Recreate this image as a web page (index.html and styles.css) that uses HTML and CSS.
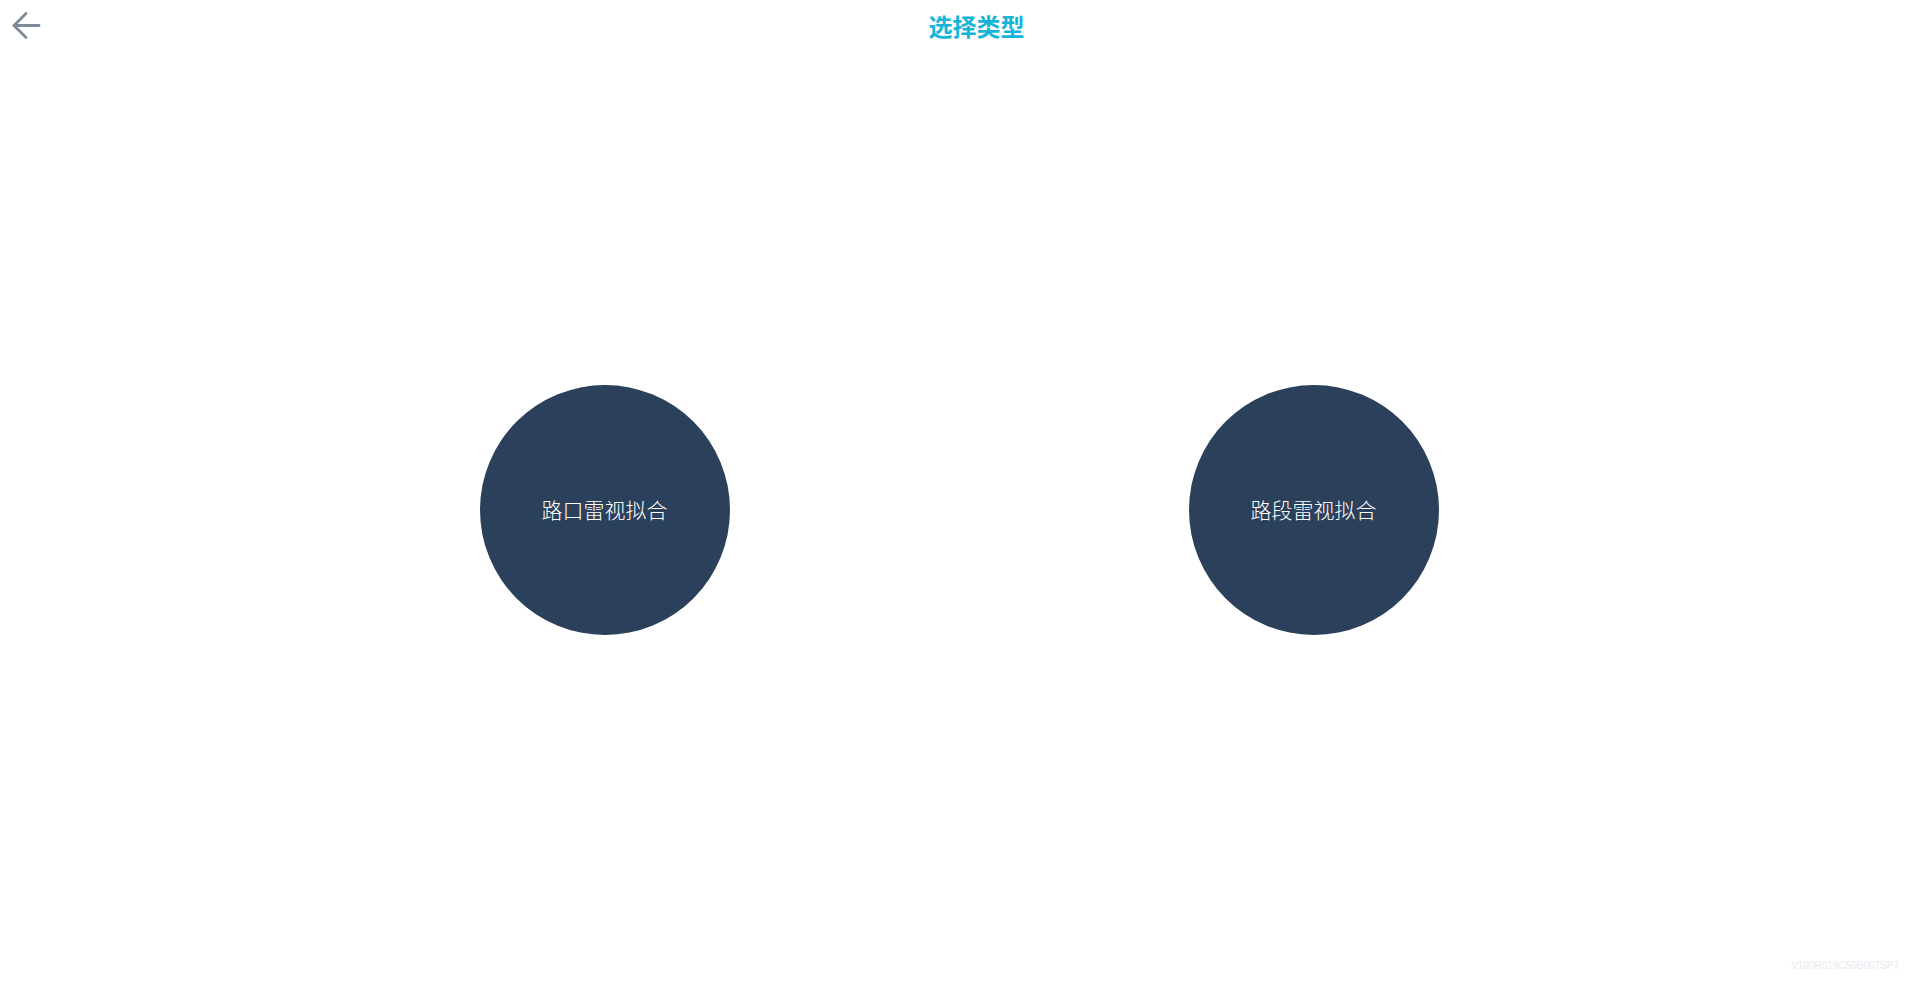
FILE: index.html
```html
<!DOCTYPE html>
<html lang="zh-CN">
<head>
<meta charset="utf-8">
<title>选择类型</title>
<link rel="stylesheet" href="styles.css">
</head>
<body>
<div class="page">
  <header class="topbar">
    <button class="back" aria-label="返回">
      <svg width="30" height="30" viewBox="0 0 30 30" fill="none" stroke="#7e8a96" stroke-width="2.8" stroke-linecap="round" stroke-linejoin="round">
        <path d="M28 14.5H3"/>
        <path d="M15 2.5L3 14.5l12 12"/>
      </svg>
    </button>
    <h1 class="title">选择类型</h1>
  </header>
  <main class="choices">
    <div class="circle">路口雷视拟合</div>
    <div class="circle">路段雷视拟合</div>
  </main>
  <footer class="version">V100R019C50B007SP7</footer>
</div>
</body>
</html>
```
FILE: styles.css
```css
html, body {
  margin: 0;
  padding: 0;
  background: #ffffff;
  height: 100%;
}
body {
  font-family: "Noto Sans CJK SC", "Noto Sans", sans-serif;
}
.page {
  position: relative;
  height: 989px;
  display: flex;
  flex-direction: column;
}
.topbar {
  position: relative;
  height: 54px;
  display: flex;
  align-items: center;
  justify-content: center;
  padding-left: 32px;
}
.back {
  position: absolute;
  left: 11px;
  top: 11px;
  width: 30px;
  height: 30px;
  padding: 0;
  border: 0;
  background: none;
  cursor: pointer;
  display: block;
}
.back svg { display: block; }
.title {
  margin: 0;
  margin-top: -2px;
  font-size: 24px;
  font-weight: 700;
  color: #14b5d8;
  line-height: 1;
}
.choices {
  display: flex;
  justify-content: center;
  gap: 459px;
  padding-top: 331px;
  padding-right: 3px;
}
.circle {
  width: 250px;
  height: 250px;
  box-sizing: border-box;
  padding-bottom: 3px;
  border-radius: 50%;
  background: #2b405a;
  color: #ffffff;
  font-size: 21px;
  font-weight: 300;
  display: flex;
  align-items: center;
  justify-content: center;
}
.version {
  position: absolute;
  right: 22px;
  bottom: 18px;
  font-family: "Liberation Sans", Arial, sans-serif;
  font-size: 10px;
  color: #ece6ea;
}
```
